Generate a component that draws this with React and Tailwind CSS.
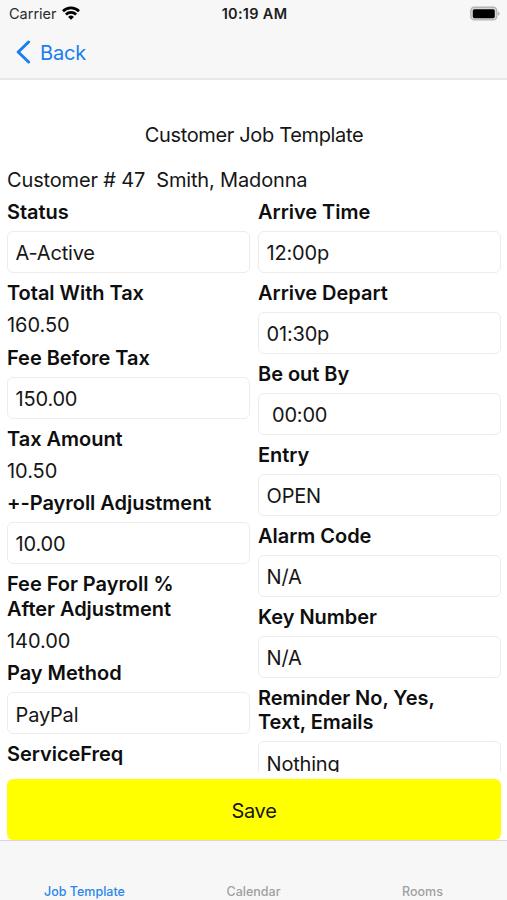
import { useState } from 'react';

const LEFT_FIELDS = [
  { label: 'Status', value: 'A-Active', editable: true },
  { label: 'Total With Tax', value: '160.50' },
  { label: 'Fee Before Tax', value: '150.00', editable: true },
  { label: 'Tax Amount', value: '10.50' },
  { label: '+-Payroll Adjustment', value: '10.00', editable: true },
  { label: 'Fee For Payroll % After Adjustment', value: '140.00' },
  { label: 'Pay Method', value: 'PayPal', editable: true },
  { label: 'ServiceFreq', value: 'Weekly', editable: true },
];

const RIGHT_FIELDS = [
  { label: 'Arrive Time', value: '12:00p', editable: true },
  { label: 'Arrive Depart', value: '01:30p', editable: true },
  { label: 'Be out By', value: ' 00:00', editable: true },
  { label: 'Entry', value: 'OPEN', editable: true },
  { label: 'Alarm Code', value: 'N/A', editable: true },
  { label: 'Key Number', value: 'N/A', editable: true },
  { label: 'Reminder No, Yes, Text, Emails', value: 'Nothing', editable: true },
];

const TABS = ['Job Template', 'Calendar', 'Rooms'];

function StatusBar() {
  return (
    <div className="grid h-7 grid-cols-3 items-center pl-[9px] pr-[7px] text-[14.5px]">
      <div className="flex items-center gap-[5px]">
        <span className="text-[#2a2a2a]">Carrier</span>
        <svg className="-mt-0.5" width="18" height="14" viewBox="0 0 18 14" fill="none" stroke="#000" strokeWidth="2.7">
          <path d="M1 5.2a11.5 11.5 0 0 1 16 0" />
          <path d="M3.9 8.5a7.4 7.4 0 0 1 10.2 0" />
          <path d="M9 13.8 6.1 10.9a4.2 4.2 0 0 1 5.8 0z" fill="#000" stroke="none" />
        </svg>
      </div>
      <span className="text-center font-semibold tracking-[0.3px] text-[#1c1c1c]">10:19 AM</span>
      <svg className="-mt-0.5 justify-self-end" width="31" height="15" viewBox="0 0 31 15">
        <rect x="1.8" y="1.3" width="26" height="12.6" rx="3.6" fill="#d8d8d8" stroke="#b4b4b4" strokeWidth="1.4" />
        <rect x="3.8" y="3.2" width="22" height="9" rx="1.6" fill="#000" />
        <path d="M29 5.4c2.2.8 2.2 3.5 0 4.3z" fill="#b0b0b0" />
      </svg>
    </div>
  );
}

function Field({ label, value, editable }) {
  const [text, setText] = useState(value);

  return (
    <div>
      <p className="w-[215px] py-1 font-semibold leading-[24.35px] tracking-[-0.03px] text-[#0e0e0e]">{label}</p>
      {editable
        ? <div className="pb-[4.1px] pt-[2.7px]">
            <input value={text} onChange={(e) => setText(e.target.value)}
                   className="block h-[41.9px] w-full rounded-md border border-[#ececec] bg-white pl-[7.6px] pr-2 pt-[2.2px] tracking-[-0.2px] outline-none" />
          </div>
        : <p className="py-1 leading-[24.35px] tracking-[-0.05px]">{value}</p>
      }
    </div>
  );
}

export default function App() {
  const [tab, setTab] = useState(TABS[0]);

  return (
    <div className="flex h-[900px] w-[507px] flex-col overflow-hidden bg-white font-['Inter',sans-serif] text-[20px] text-[#161616]">
      <header className="h-20 shrink-0 border-b-2 border-[#e8e8e8] bg-[#f7f7f7]">
        <StatusBar />
        <button className="flex h-12 items-center gap-[9px] pl-4 text-[#1a7df0]">
          <svg width="15" height="24" viewBox="0 0 15 24" fill="none" stroke="currentColor"
               strokeWidth="3" strokeLinecap="round" strokeLinejoin="round">
            <path d="M12.6 2 2.2 12l10.4 10" />
          </svg>
          <span className="pt-px tracking-[-0.2px]">Back</span>
        </button>
      </header>

      <main className="h-[691.5px] shrink-0 overflow-hidden pl-[7px] pr-1.5">
        <h1 className="pt-[43px] text-center leading-6 tracking-[-0.35px]">Customer Job Template</h1>
        <p className="mt-[17px] whitespace-pre py-1 leading-6 tracking-[-0.15px]">Customer # 47  Smith, Madonna</p>
        <div className="grid grid-cols-2 gap-2">
          <div>{LEFT_FIELDS.map((f) => <Field key={f.label} {...f} />)}</div>
          <div>{RIGHT_FIELDS.map((f) => <Field key={f.label} {...f} />)}</div>
        </div>
      </main>

      <div className="shrink-0 pl-[7px] pr-1.5 pt-[7.5px]">
        <button className="h-[61px] w-full rounded-md bg-[#ffff00] pt-0.5 tracking-[-0.3px]">Save</button>
      </div>

      <nav className="grid flex-1 grid-cols-3 border-t border-[#d8d8d8] bg-[#f7f7f7]">
        {TABS.map((name) => (
          <button key={name} onClick={() => setTab(name)}
                  className={`flex items-end justify-center text-[12.5px] font-medium leading-[17px] ${name === tab ? 'text-[#2a86ec]' : 'text-[#a0a0a0]'}`}>
            {name}
          </button>
        ))}
      </nav>
    </div>
  );
}
